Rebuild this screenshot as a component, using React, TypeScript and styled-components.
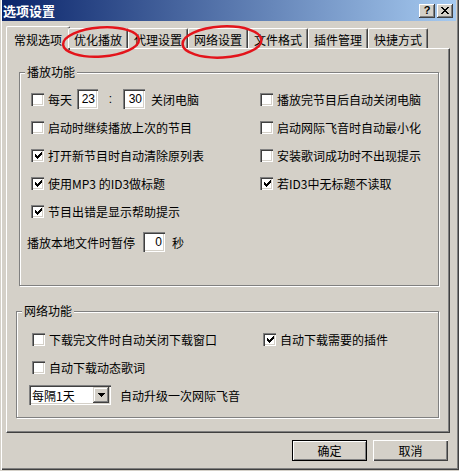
import React from "react";
import styled, { createGlobalStyle } from "styled-components";

const GlobalStyle = createGlobalStyle`
  html, body { margin: 0; padding: 0; background: #d4d0c8; }
  body {
    font-family: "Noto Sans CJK SC", "Noto Sans", sans-serif;
    font-size: 12px;
    color: #000;
  }
  * { box-sizing: border-box; }
`;

const Window = styled.div`
  position: relative;
  width: 459px;
  height: 470px;
  padding: 0 3px 3px 2px;
  background: #d4d0c8;
  box-shadow: inset 1px 0 #d4d0c8, inset 2px 0 #fff, inset -1px -1px #404040,
    inset -2px -2px #808080;
  display: flex;
  flex-direction: column;
`;

const TitleBar = styled.div`
  height: 21px;
  display: flex;
  align-items: center;
  padding: 0 3px 0 1px;
  background: linear-gradient(to right, #0a246a, #a6caf0);
`;

const Title = styled.span`
  flex: 1;
  color: #fff;
  font-weight: bold;
  font-size: 13px;
  line-height: 21px;
`;

const CaptionButton = styled.span`
  width: 16px;
  height: 14px;
  background: #d4d0c8;
  box-shadow: inset -1px -1px #404040, inset 1px 1px #fff, inset -2px -2px #808080;
  display: flex;
  align-items: center;
  justify-content: center;
  font-family: "Liberation Sans", Arial, sans-serif;
  font-weight: bold;
  font-size: 11px;
  line-height: 1;
  & + & { margin-left: 2px; }
`;

const Body = styled.div`
  flex: 1;
  display: flex;
  flex-direction: column;
  padding: 5px 6px 0 4px;
`;

const TabStrip = styled.div`
  position: relative;
  z-index: 1;
  display: flex;
  align-items: flex-end;
  height: 22px;
  padding-left: 2px;
`;

const Tab = styled.div<{ $active?: boolean }>`
  height: ${(p) => (p.$active ? 24 : 20)}px;
  margin: ${(p) => (p.$active ? "0 -2px -2px" : "0")};
  padding: ${(p) => (p.$active ? "1px 7px 0" : "2px 5px 0")};
  display: flex;
  align-items: center;
  background: #d4d0c8;
  border-top: 1px solid #fff;
  border-left: 1px solid #fff;
  border-right: 1px solid #404040;
  border-radius: 2px 2px 0 0;
  box-shadow: inset -1px 0 #808080;
  white-space: nowrap;
`;

const Panel = styled.div`
  height: 385px;
  display: flex;
  flex-direction: column;
  padding-top: 16px;
  border-top: 1px solid #fff;
  border-left: 1px solid #fff;
  border-right: 1px solid #404040;
  border-bottom: 1px solid #404040;
  box-shadow: inset -1px -1px #808080;
`;

const GroupBox = styled.fieldset<{ $left: number }>`
  margin: 0 10px 0 ${(p) => p.$left}px;
  padding: 0;
  min-width: 0;
  border: 1px solid #808080;
  box-shadow: inset 1px 1px #fff, 1px 1px #fff;
  & + & { margin-top: 18px; }
`;

const Legend = styled.legend`
  margin-left: 5px;
  padding: 0 2px;
  line-height: 14px;
  background: #d4d0c8;
`;

const OptionGrid = styled.div<{ $col: number; $pad: string }>`
  display: grid;
  grid-template-columns: ${(p) => p.$col}px 1fr;
  grid-auto-rows: 28px;
  align-items: center;
  padding: ${(p) => p.$pad};
`;

const Row = styled.div<{ $shift?: number; $indent?: number }>`
  grid-column: 1 / -1;
  display: flex;
  align-items: center;
  margin-left: ${(p) => p.$indent ?? 0}px;
  margin-top: ${(p) => p.$shift ?? 0}px;
`;

const Check = styled.label`
  display: flex;
  align-items: center;
  gap: 4px;
  white-space: nowrap;
`;

const Box = styled.span`
  width: 13px;
  height: 13px;
  flex: none;
  background: #fff;
  box-shadow: inset 1px 1px #808080, inset 2px 2px #404040, inset -1px -1px #fff,
    inset -2px -2px #d4d0c8;
  display: flex;
  align-items: center;
  justify-content: center;
  padding: 1px 0 0 1px;
`;

const Field = styled.span<{ $w: number; $gap?: number }>`
  width: ${(p) => p.$w}px;
  height: 20px;
  margin-left: ${(p) => p.$gap ?? 0}px;
  flex: none;
  background: #fff;
  box-shadow: inset 1px 1px #808080, inset 2px 2px #404040, inset -1px -1px #fff,
    inset -2px -2px #d4d0c8;
  display: flex;
  align-items: center;
  justify-content: flex-end;
  padding-right: 3px;
  font-family: "Liberation Sans", Arial, sans-serif;
  font-size: 12px;
`;

const Colon = styled.span`
  width: 17px;
  text-align: center;
  font-family: "Liberation Sans", Arial, sans-serif;
`;

const Text = styled.span<{ $gap?: number }>`
  margin-left: ${(p) => p.$gap ?? 0}px;
  white-space: nowrap;
`;

const Combo = styled.span`
  width: 82px;
  height: 20px;
  margin-left: -3px;
  flex: none;
  display: flex;
  align-items: center;
  padding: 2px;
  background: #fff;
  box-shadow: inset 1px 1px #808080, inset 2px 2px #404040, inset -1px -1px #fff,
    inset -2px -2px #d4d0c8;
`;

const ComboText = styled.span`
  flex: 1;
  padding-left: 1px;
  white-space: nowrap;
`;

const DropButton = styled.span`
  width: 16px;
  height: 16px;
  background: #d4d0c8;
  box-shadow: inset -1px -1px #404040, inset 1px 1px #d4d0c8, inset -2px -2px #808080,
    inset 2px 2px #fff;
  display: flex;
  align-items: center;
  justify-content: center;
`;

const ButtonRow = styled.div`
  display: flex;
  justify-content: flex-end;
  gap: 6px;
  margin-top: 7px;
  padding-right: 2px;
`;

const PushButton = styled.button<{ $default?: boolean }>`
  width: 75px;
  height: 21px;
  padding: 0;
  font: inherit;
  color: #000;
  background: #d4d0c8;
  border: ${(p) => (p.$default ? "1px solid #000" : "none")};
  box-shadow: ${(p) =>
    p.$default
      ? "inset 1px 1px #fff, inset -1px -1px #808080"
      : "inset 1px 1px #fff, inset -1px -1px #404040, inset -2px -2px #808080"};
`;

const Marks = styled.svg`
  position: absolute;
  left: 0;
  top: 0;
  z-index: 2;
  pointer-events: none;
`;

const CheckMark = () => (
  <svg width="7" height="7" viewBox="0 0 7 7" shapeRendering="crispEdges">
    <path
      fill="#000"
      d="M6 0h1v1h-1zM5 1h2v1h-2zM0 2h1v1h-1zM4 2h3v1h-3zM0 3h2v1h-2zM3 3h3v1h-3zM0 4h5v1h-5zM1 5h3v1h-3zM2 6h1v1h-1z"
    />
  </svg>
);

const CloseGlyph = () => (
  <svg width="8" height="7" viewBox="0 0 8 7" shapeRendering="crispEdges">
    <path
      fill="#000"
      d="M0 0h2v1h-2zM6 0h2v1h-2zM1 1h2v1h-2zM5 1h2v1h-2zM2 2h4v1h-4zM3 3h2v1h-2zM2 4h4v1h-4zM1 5h2v1h-2zM5 5h2v1h-2zM0 6h2v1h-2zM6 6h2v1h-2z"
    />
  </svg>
);

const Option: React.FC<{ label?: string; checked?: boolean; children?: React.ReactNode }> = ({
  label,
  checked,
  children,
}) => (
  <Check>
    <Box>{checked && <CheckMark />}</Box>
    {label}
    {children}
  </Check>
);

const tabs = ["常规选项", "优化播放", "代理设置", "网络设置", "文件格式", "插件管理", "快捷方式"];

const playRows: [string, boolean, string | null, boolean][] = [
  ["启动时继续播放上次的节目", false, "启动网际飞音时自动最小化", false],
  ["打开新节目时自动清除原列表", true, "安装歌词成功时不出现提示", false],
  ["使用MP3 的ID3做标题", true, "若ID3中无标题不读取", true],
  ["节目出错是显示帮助提示", true, null, false],
];

export default function App() {
  return (
    <Window>
      <GlobalStyle />
      <TitleBar>
        <Title>选项设置</Title>
        <CaptionButton>?</CaptionButton>
        <CaptionButton>
          <CloseGlyph />
        </CaptionButton>
      </TitleBar>
      <Body>
        <TabStrip>
          {tabs.map((t, i) => (
            <Tab key={t} $active={i === 0}>
              {t}
            </Tab>
          ))}
        </TabStrip>
        <Panel>
          <GroupBox $left={12}>
            <Legend>播放功能</Legend>
            <OptionGrid $col={229} $pad="6px 0 32px 11px">
              <Option label="每天">
                <Field $w={21} $gap={1}>23</Field>
                <Colon>:</Colon>
                <Field $w={22}>30</Field>
                <Text $gap={2}>关闭电脑</Text>
              </Option>
              <Option label="播放完节目后自动关闭电脑" />
              {playRows.map(([l, lc, r, rc]) => (
                <React.Fragment key={l}>
                  <Option label={l} checked={lc} />
                  {r && <Option label={r} checked={rc} />}
                </React.Fragment>
              ))}
              <Row $indent={-4} $shift={6}>
                <Text>播放本地文件时暂停</Text>
                <Field $w={22} $gap={8}>0</Field>
                <Text $gap={7}>秒</Text>
              </Row>
            </OptionGrid>
          </GroupBox>
          <GroupBox $left={9}>
            <Legend>网络功能</Legend>
            <OptionGrid $col={231} $pad="7px 0 8px 15px">
              <Option label="下载完文件时自动关闭下载窗口" />
              <Option label="自动下载需要的插件" checked />
              <Option label="自动下载动态歌词" />
              <Row>
                <Combo>
                  <ComboText>每隔1天</ComboText>
                  <DropButton>
                    <svg width="7" height="4" viewBox="0 0 7 4" shapeRendering="crispEdges">
                      <path fill="#000" d="M0 0h7v1h-7zM1 1h5v1h-5zM2 2h3v1h-3zM3 3h1v1h-1z" />
                    </svg>
                  </DropButton>
                </Combo>
                <Text $gap={9}>自动升级一次网际飞音</Text>
              </Row>
            </OptionGrid>
          </GroupBox>
        </Panel>
        <ButtonRow>
          <PushButton $default>确定</PushButton>
          <PushButton>取消</PushButton>
        </ButtonRow>
      </Body>
      <Marks width="459" height="80" viewBox="0 0 459 80">
        <ellipse
          cx="101"
          cy="42"
          rx="38"
          ry="14.5"
          transform="rotate(-4 101 42)"
          fill="none"
          stroke="#e3141b"
          strokeWidth="2.5"
        />
        <ellipse
          cx="222"
          cy="42"
          rx="39.5"
          ry="15.5"
          transform="rotate(-3 222 42)"
          fill="none"
          stroke="#e3141b"
          strokeWidth="2.5"
        />
      </Marks>
    </Window>
  );
}
